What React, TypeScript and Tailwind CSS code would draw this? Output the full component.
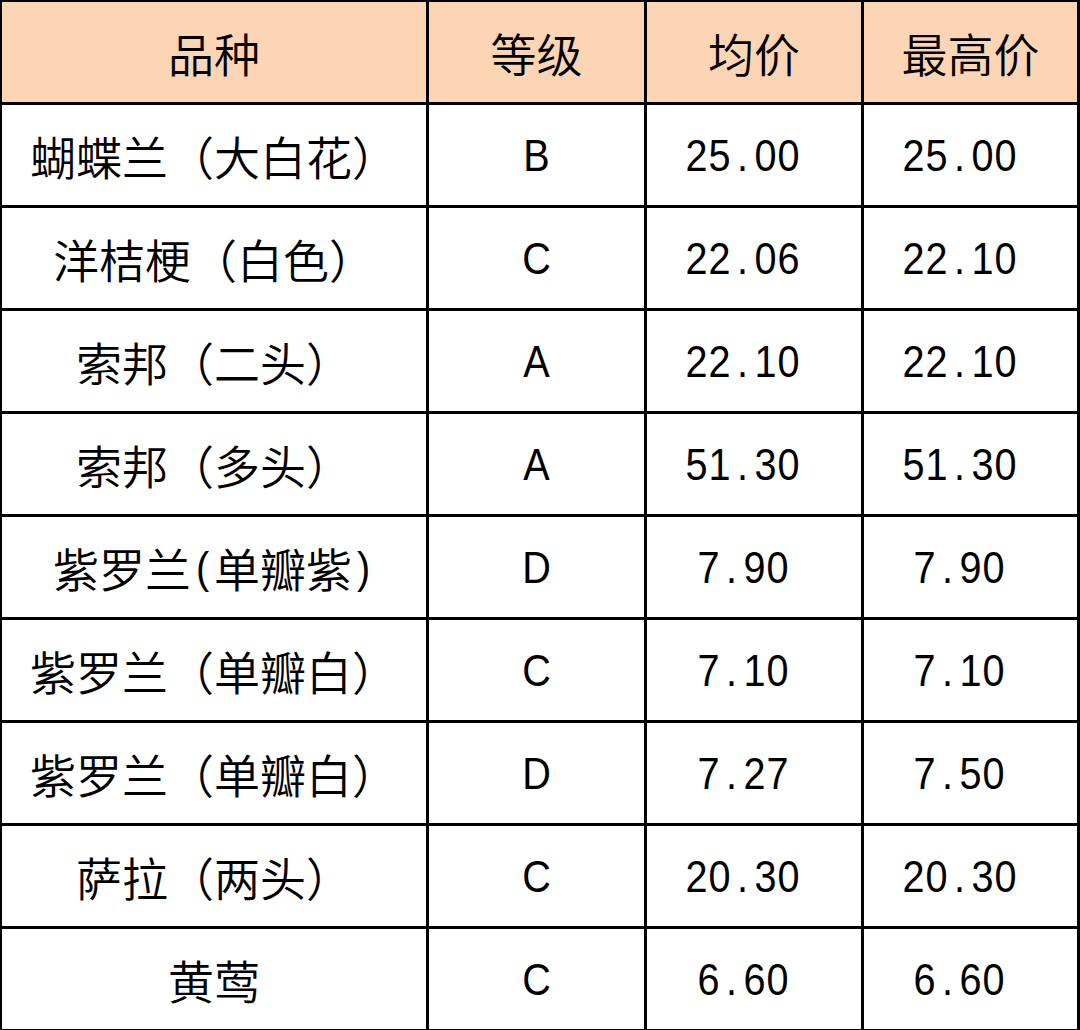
import React from "react";

const rows: [string, string, string, string][] = [
  ["蝴蝶兰（大白花）", "B", "25.00 ", "25.00 "],
  ["洋桔梗（白色）", "C", "22.06 ", "22.10 "],
  ["索邦（二头）", "A", "22.10 ", "22.10 "],
  ["索邦（多头）", "A", "51.30 ", "51.30 "],
  ["紫罗兰(单瓣紫)", "D", "7.90 ", "7.90 "],
  ["紫罗兰（单瓣白）", "C", "7.10 ", "7.10 "],
  ["紫罗兰（单瓣白）", "D", "7.27 ", "7.50 "],
  ["萨拉（两头）", "C", "20.30 ", "20.30 "],
  ["黄莺", "C", "6.60 ", "6.60 "],
];

const header = ["品种", "等级", "均价", "最高价"];

function Txt({ s }: { s: string }) {
  return (
    <span className="inline-flex items-center">
      {Array.from(s).map((ch, i) => {
        const ascii = ch.charCodeAt(0) < 128;
        if (ascii) {
          return (
            <span
              key={i}
              className="inline-flex justify-center w-[23px] text-[44px] leading-none scale-x-[0.9] translate-y-[1px]"
              style={{ fontFamily: '"Liberation Sans", Arial, sans-serif' }}
            >
              {ch === " " ? "\u00a0" : ch}
            </span>
          );
        }
        return (
          <span key={i} className="inline-block text-[46px] leading-none">
            {ch}
          </span>
        );
      })}
    </span>
  );
}

export default function App() {
  return (
    <div
      className="w-[1080px] h-[1030px] bg-black pt-[2px] pb-[1px] pl-[2px] pr-[3px] grid grid-cols-[424px_215px_214px_213px] auto-rows-[100px] gap-[3px] text-black font-[350]"
      style={{ fontFamily: '"Noto Sans CJK SC", "Noto Sans", sans-serif' }}
    >
      {header.map((h, i) => (
        <div key={"h" + i} className="bg-[#fcd5b4] flex items-center justify-center">
          <Txt s={h} />
        </div>
      ))}
      {rows.map((r, ri) =>
        r.map((c, ci) => (
          <div key={ri + "-" + ci} className="bg-white flex items-center justify-center">
            <Txt s={c} />
          </div>
        ))
      )}
    </div>
  );
}
